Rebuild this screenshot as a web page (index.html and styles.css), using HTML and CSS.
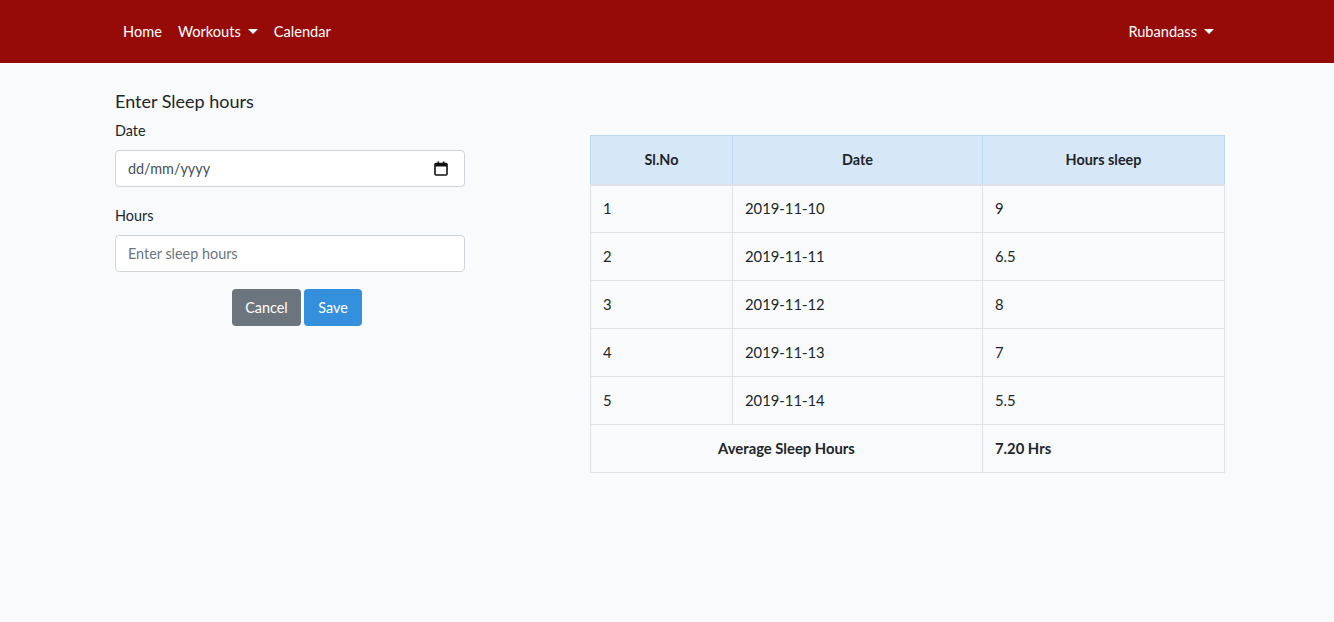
FILE: index.html
```html
<!DOCTYPE html>
<html lang="en">
<head>
<meta charset="utf-8">
<title>Sleep hours</title>
<link rel="stylesheet" href="styles.css">
</head>
<body>
<nav class="navbar">
  <div class="nav-inner">
    <ul class="nav-list">
      <li><a class="nav-link" href="#">Home</a></li>
      <li><a class="nav-link dropdown" href="#">Workouts</a></li>
      <li><a class="nav-link" href="#">Calendar</a></li>
    </ul>
    <ul class="nav-list">
      <li><a class="nav-link dropdown" href="#">Rubandass</a></li>
    </ul>
  </div>
</nav>
<main class="container">
  <section class="form-col">
    <h5 class="title">Enter Sleep hours</h5>
    <div class="form-group">
      <label class="label" for="date">Date</label>
      <div class="date-wrap">
        <input class="form-control" id="date" type="text" placeholder="dd/mm/yyyy">
        <svg class="cal-icon" width="14" height="15" viewBox="0 0 14 15" aria-hidden="true">
          <rect x="1" y="2.5" width="12" height="11.5" rx="1" fill="none" stroke="#111" stroke-width="1.6"/>
          <rect x="1" y="2.5" width="12" height="3" fill="#111"/>
          <rect x="3.5" y="0.5" width="1.6" height="3" fill="#111"/>
          <rect x="8.9" y="0.5" width="1.6" height="3" fill="#111"/>
        </svg>
      </div>
    </div>
    <div class="form-group">
      <label class="label" for="hours">Hours</label>
      <input class="form-control" id="hours" type="text" placeholder="Enter sleep hours">
    </div>
    <div class="actions">
      <button class="btn btn-secondary" type="button">Cancel</button>
      <button class="btn btn-primary" type="button">Save</button>
    </div>
  </section>
  <section class="table-col">
    <table class="table">
      <thead>
        <tr><th class="c1">Sl.No</th><th class="c2">Date</th><th class="c3">Hours sleep</th></tr>
      </thead>
      <tbody>
        <tr><td>1</td><td>2019-11-10</td><td>9</td></tr>
        <tr><td>2</td><td>2019-11-11</td><td>6.5</td></tr>
        <tr><td>3</td><td>2019-11-12</td><td>8</td></tr>
        <tr><td>4</td><td>2019-11-13</td><td>7</td></tr>
        <tr><td>5</td><td>2019-11-14</td><td>5.5</td></tr>
        <tr class="avg"><td colspan="2" class="center">Average Sleep Hours</td><td>7.20 Hrs</td></tr>
      </tbody>
    </table>
  </section>
</main>
</body>
</html>
```
FILE: styles.css
```css
* { box-sizing: border-box; }
html, body { margin: 0; }
body {
  background: #f8fafc;
  font-family: Lato, "Noto Sans", "Liberation Sans", sans-serif;
  font-size: 14.4px;
  line-height: 1.6;
  color: #212529;
}
.navbar {
  background: #960b08;
  height: 63px;
  display: flex;
  align-items: center;
}
.nav-inner {
  width: 1140px;
  margin: 0 auto;
  padding: 0 15px 0 18px;
  display: flex;
  justify-content: space-between;
  align-items: center;
}
.nav-list {
  list-style: none;
  margin: 0;
  padding: 0;
  display: flex;
}
.nav-link {
  display: block;
  padding: 8px 8px;
  color: #fff;
  text-decoration: none;
  font-size: 14.6px;
}
.dropdown::after {
  content: "";
  display: inline-block;
  margin-left: 7px;
  vertical-align: 3px;
  border-top: 5px solid #fff;
  border-left: 5px solid transparent;
  border-right: 5px solid transparent;
}
.container {
  width: 1140px;
  margin: 0 auto;
  padding: 28px 12px 0 18px;
  display: flex;
  align-items: flex-start;
}
.form-col {
  width: 350px;
  flex: none;
}
.table-col {
  width: 635px;
  flex: none;
  margin-left: 125px;
  padding-top: 44px;
}
.title {
  margin: 0 0 6px;
  font-size: 18px;
  font-weight: 400;
  line-height: 1.2;
}
.form-group { margin-bottom: 17px; }
.label {
  display: block;
  margin-bottom: 8px;
}
.form-control {
  display: block;
  width: 100%;
  height: 37px;
  padding: 6px 12px;
  font: inherit;
  color: #495057;
  background: #fff;
  border: 1px solid #ced4da;
  border-radius: 4px;
}
.form-control::placeholder { color: #6c757d; }
.date-wrap { position: relative; }
.date-wrap .form-control::placeholder { color: #495057; }
.cal-icon {
  position: absolute;
  right: 17px;
  top: 11px;
}
.actions {
  text-align: center;
  padding-left: 14px;
}
.btn {
  display: inline-block;
  height: 37px;
  padding: 6px 12px;
  font: inherit;
  color: #fff;
  border: 1px solid transparent;
  border-radius: 4px;
  cursor: pointer;
}
.btn-secondary { background: #6c757d; }
.btn-primary { background: #3490dc; padding: 6px 13px; }
.table {
  width: 100%;
  border-collapse: collapse;
}
.table th, .table td {
  height: 48px;
  padding: 0 12px;
  border: 1px solid #dee2e6;
  text-align: left;
  font-weight: 400;
}
.table td { font-size: 14.8px; }
.table thead th {
  background: #d6e8f8;
  border-color: #b8daf5;
  border-bottom: 2px solid #dee2e6;
  text-align: center;
  font-weight: 700;
  height: 49px;
}
.c1 { width: 142px; }
.c2 { width: 250px; }
.table td.center { text-align: center; }
.avg td { font-weight: 700; }
```
